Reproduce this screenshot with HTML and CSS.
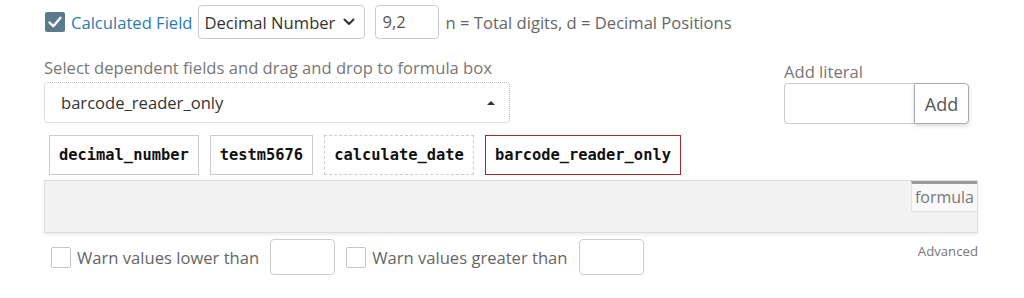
FILE: index.html
```html
<!DOCTYPE html>
<html lang="en">
<head>
  <meta charset="UTF-8" />
  <title>Calculated Field</title>
  <link rel="stylesheet" href="styles.css">
</head>
<body>
  <div class="panel">
    <div class="type-row">
      <label class="calc-toggle">
        <span class="check checked">
          <svg viewBox="0 0 20 20" width="20" height="20"><path d="M4.5 10.5 L8.3 14.2 L15.5 5.8" fill="none" stroke="#fff" stroke-width="2.4" stroke-linecap="round" stroke-linejoin="round"/></svg>
        </span>
        Calculated Field
      </label>
      <div class="select-box">
        <span>Decimal Number</span>
        <svg viewBox="0 0 12 8" width="12" height="8"><path d="M1.5 1.5 L6 6 L10.5 1.5" fill="none" stroke="#333" stroke-width="2" stroke-linecap="round" stroke-linejoin="round"/></svg>
      </div>
      <div class="small-input">9,2</div>
      <span class="hint">n = Total digits, d = Decimal Positions</span>
    </div>

    <div class="fields-row">
      <div class="dep-col">
        <div class="label">Select dependent fields and drag and drop to formula box</div>
        <div class="select2">
          <span>barcode_reader_only</span>
          <span class="caret"></span>
        </div>
      </div>
      <div class="literal-col">
        <div class="label">Add literal</div>
        <div class="literal-group">
          <div class="literal-input"></div>
          <button class="add-btn">Add</button>
        </div>
      </div>
    </div>

    <div class="chips">
      <span class="chip">decimal_number</span>
      <span class="chip">testm5676</span>
      <span class="chip dashed">calculate_date</span>
      <span class="chip active">barcode_reader_only</span>
    </div>

    <div class="formula-box">
      <span class="formula-tag">formula</span>
    </div>

    <div class="warn-row">
      <div class="warn-group">
        <span class="check"></span>
        <span class="warn-label">Warn values lower than</span>
        <div class="warn-input"></div>
        <span class="check"></span>
        <span class="warn-label">Warn values greater than</span>
        <div class="warn-input"></div>
      </div>
      <span class="advanced">Advanced</span>
    </div>
  </div>
</body>
</html>
```

FILE: styles.css
```css
body, html {
  margin: 0;
  padding: 0;
  background: #fff;
  font-family: "Open Sans", sans-serif;
  font-size: 16.6px;
  color: #333;
}

.panel {
  width: 934px;
  padding: 5px 0 0 44px;
}

/* top row */
.type-row {
  display: flex;
  align-items: center;
  height: 34px;
}

.calc-toggle {
  display: flex;
  align-items: center;
  gap: 6px;
  color: #2b7bb0;
  margin-left: 1px;
}

.check {
  display: inline-block;
  width: 19px;
  height: 19px;
  border: 1px solid #c4c4c4;
  border-radius: 2px;
  box-sizing: border-box;
  background: #fff;
  flex-shrink: 0;
}

.check.checked {
  width: 20px;
  height: 20px;
  border: none;
  background: #5b7b8c;
}

.check svg {
  display: block;
}

.select-box {
  display: flex;
  align-items: center;
  justify-content: space-between;
  box-sizing: border-box;
  width: 167px;
  height: 34px;
  margin-left: 5px;
  padding: 0 9px 0 6px;
  border: 1px solid #ccc;
  border-radius: 4px;
  color: #333;
}

.small-input {
  box-sizing: border-box;
  width: 64px;
  height: 34px;
  margin-left: 10px;
  padding: 5px 7px;
  border: 1px solid #ccc;
  border-radius: 4px;
  color: #555;
  line-height: 22px;
}

.hint {
  margin-left: 7px;
  color: #666;
}

/* dependent fields + literal */
.fields-row {
  display: flex;
  margin-top: 18px;
}

.label {
  color: #777;
  line-height: 22px;
}

.dep-col {
  width: 466px;
}

.select2 {
  display: flex;
  align-items: center;
  justify-content: space-between;
  box-sizing: border-box;
  height: 41px;
  margin-top: 3px;
  padding: 0 14px 0 16px;
  border: 1px dotted #bbb;
  border-radius: 4px;
  color: #333;
}

.caret {
  width: 0;
  height: 0;
  border-left: 4px solid transparent;
  border-right: 4px solid transparent;
  border-bottom: 4px solid #333;
}

.literal-col {
  margin-left: 274px;
  padding-top: 4px;
}

.literal-group {
  display: flex;
}

.literal-input {
  box-sizing: border-box;
  width: 130px;
  height: 41px;
  border: 1px solid #ccc;
  border-right: none;
  border-radius: 4px 0 0 4px;
}

.add-btn {
  box-sizing: border-box;
  width: 55px;
  height: 41px;
  border: 1px solid #aaa;
  border-radius: 0 4px 4px 0;
  background: #fff;
  font-family: "Open Sans", sans-serif;
  font-size: 18px;
  color: #555;
  box-shadow: 0 2px 4px rgba(0, 0, 0, 0.15);
  padding: 0;
}

/* chips */
.chips {
  display: flex;
  gap: 11px;
  margin: 11px 0 0 5px;
}

.chip {
  box-sizing: border-box;
  height: 40px;
  line-height: 38px;
  padding: 0 9px;
  border: 1px solid #ccc;
  font-family: "DejaVu Sans Mono", monospace;
  font-weight: bold;
  font-size: 15.4px;
  color: #111;
}

.chip.dashed {
  border: 1px dashed #ccc;
}

.chip.active {
  border-color: #a52a2a;
}

/* formula */
.formula-box {
  display: flex;
  justify-content: flex-end;
  align-items: flex-start;
  box-sizing: border-box;
  height: 53px;
  margin-top: 5px;
  border: 1px solid #ddd;
  background: #f2f2f2;
  box-shadow: 0 2px 3px rgba(0, 0, 0, 0.08);
}

.formula-tag {
  box-sizing: border-box;
  height: 31px;
  padding: 0 3px;
  border-top: 3px solid #999;
  background: #f8f8f8;
  border-left: 1px solid #e2e2e2;
  border-bottom: 1px solid #e2e2e2;
  color: #777;
  font-size: 16px;
  line-height: 26px;
}

/* warnings */
.warn-row {
  display: flex;
  justify-content: space-between;
  align-items: flex-start;
  margin-top: 6px;
}

.warn-group {
  display: flex;
  align-items: center;
  padding-left: 7px;
}

.warn-group .check {
  width: 20px;
  height: 21px;
}

.warn-label {
  margin-left: 6px;
  color: #666;
}

.warn-input {
  box-sizing: border-box;
  width: 65px;
  height: 36px;
  margin: 0 11px;
  border: 1px solid #ccc;
  border-radius: 4px;
}

.advanced {
  margin-top: 3px;
  font-size: 13.2px;
  color: #777;
}
```
